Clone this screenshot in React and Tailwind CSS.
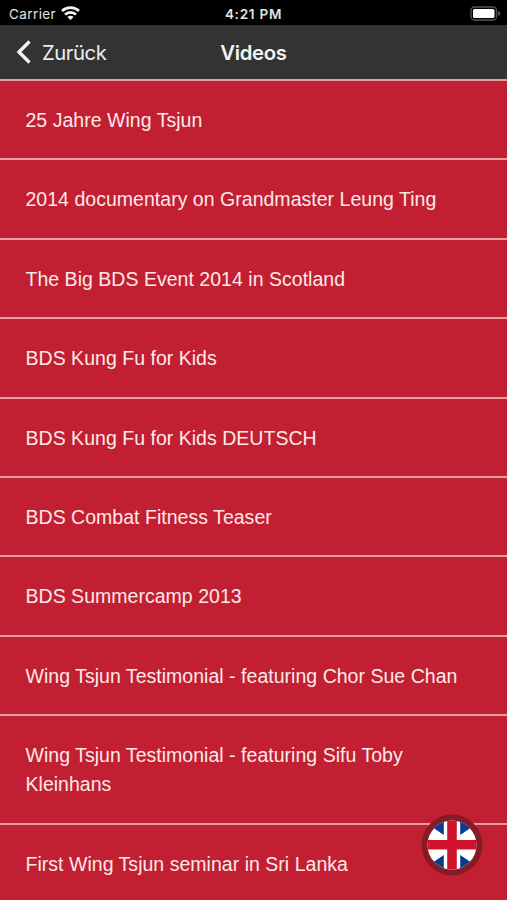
const videos = [
  "25 Jahre Wing Tsjun",
  "2014 documentary on Grandmaster Leung Ting",
  "The Big BDS Event 2014 in Scotland",
  "BDS Kung Fu for Kids",
  "BDS Kung Fu for Kids DEUTSCH",
  "BDS Combat Fitness Teaser",
  "BDS Summercamp 2013",
  "Wing Tsjun Testimonial - featuring Chor Sue Chan",
  "Wing Tsjun Testimonial - featuring Sifu Toby Kleinhans",
  "First Wing Tsjun seminar in Sri Lanka",
];

function StatusBar() {
  return (
    <div className="grid h-[25px] shrink-0 grid-cols-3 items-center bg-black text-[13.5px] text-[#e4e4e4]">
      <div className="flex items-center gap-[5px] pl-[9px] pt-[3px]">
        <span className="leading-4 tracking-[0.4px]">Carrier</span>
        <svg className="-mt-[2px] h-[14px] w-[19px]" viewBox="0 0 19 14" fill="none" stroke="#f4f4f4" strokeWidth="2.7">
          <path d="M1 5C5.8.5 13.2.5 18 5" />
          <path d="M4 8.6c3-2.9 8-2.9 11 0" />
          <path d="M6.4 11c1.7-1.7 4.5-1.7 6.2 0L9.5 14z" fill="#f4f4f4" stroke="none" />
        </svg>
      </div>
      <div className="pt-[3px] text-center font-semibold leading-4 tracking-[0.75px]">4:21 PM</div>
      <div className="flex justify-end pr-[6px] pt-[1px]">
        <svg className="h-[15px] w-[31px]" viewBox="0 0 31 15">
          <rect x="1" y="1" width="25.5" height="13" rx="3.5" fill="none" stroke="#555" strokeWidth="1.3" />
          <rect x="3" y="3" width="21.5" height="9" rx="1.6" fill="#fff" />
          <path d="M28 5c3 1 3 4 0 5z" fill="#555" />
        </svg>
      </div>
    </div>
  );
}

function NavBar() {
  return (
    <div className="grid h-[54px] shrink-0 grid-cols-3 items-center bg-[#333333] text-[#eeeeee]">
      <div className="flex items-center gap-[11px] pl-4">
        <svg className="h-6 w-[15px]" viewBox="0 0 15 24" fill="none" stroke="#f2f2f2" strokeWidth="3.4">
          <path d="M13.5 1.5 3 12l10.5 10.5" />
        </svg>
        <span className="pt-px text-[20.3px] leading-6 tracking-[-0.45px]">Zurück</span>
      </div>
      <h1 className="pt-px text-center text-[20.3px] font-semibold leading-6 tracking-[-0.3px] text-[#f4f4f4]">Videos</h1>
    </div>
  );
}

function LanguageButton() {
  return (
    <button className="absolute bottom-6 right-6 size-[62px]" aria-label="English">
      <svg className="size-full" viewBox="0 0 62 62">
        <defs>
          <clipPath id="flag">
            <circle cx="31" cy="31" r="24.5" />
          </clipPath>
        </defs>
        <circle cx="31" cy="31" r="30.5" fill="#861a26" />
        <g clipPath="url(#flag)">
          <path fill="#fff" d="M0 0h62v62H0z" />
          <path fill="#083b8e" d="M11 13 22.8 21V0H11zM51 13 39.2 21V0H51zM11 49 22.8 41V62H11zM51 49 39.2 41V62H51z" />
          <path fill="#d0142c" d="M0 26h62v9.5H0zM26.2 0h9.6v62h-9.6z" />
        </g>
      </svg>
    </button>
  );
}

export default function App() {
  return (
    <main className="relative flex h-[900px] w-[507px] flex-col overflow-hidden bg-[#c31f32] font-['Inter','Liberation_Sans',sans-serif]">
      <StatusBar />
      <NavBar />
      <ul className="font-['Liberation_Sans',Arial,sans-serif] text-[19.5px] leading-[29.2px] tracking-[0.025px] text-[#fbe9e9]">
        {videos.map((title) => (
          <li key={title} className="border-t-2 border-[#e99ba4] pb-[23.2px] pl-[25.5px] pr-[25px] pt-[25px]">
            {title}
          </li>
        ))}
      </ul>
      <LanguageButton />
    </main>
  );
}
